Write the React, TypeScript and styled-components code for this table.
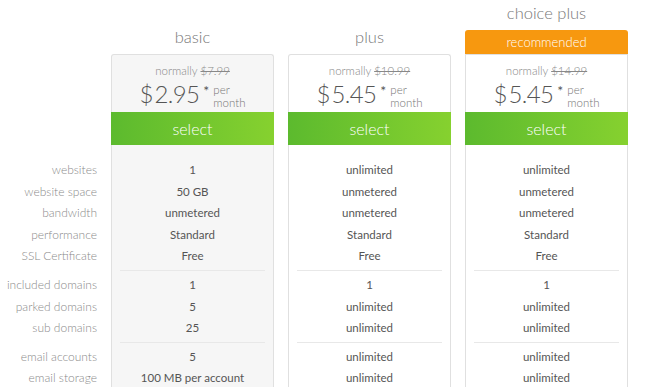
import React from 'react';
import styled, { createGlobalStyle } from 'styled-components';

const GlobalStyle = createGlobalStyle`
  html, body {
    margin: 0;
    padding: 0;
    background: #ffffff;
    font-family: Lato, "Open Sans", "Liberation Sans", sans-serif;
    overflow: hidden;
  }
`;

type Plan = {
  name: string;
  was: string;
  price: string;
  recommended?: boolean;
  shaded?: boolean;
  groups: string[][];
};

const labelGroups = [
  ['websites', 'website space', 'bandwidth', 'performance', 'SSL Certificate'],
  ['included domains', 'parked domains', 'sub domains'],
  ['email accounts', 'email storage'],
];

const plans: Plan[] = [
  {
    name: 'basic',
    was: '$7.99',
    price: '2.95',
    shaded: true,
    groups: [
      ['1', '50 GB', 'unmetered', 'Standard', 'Free'],
      ['1', '5', '25'],
      ['5', '100 MB per account'],
    ],
  },
  {
    name: 'plus',
    was: '$10.99',
    price: '5.45',
    groups: [
      ['unlimited', 'unmetered', 'unmetered', 'Standard', 'Free'],
      ['1', 'unlimited', 'unlimited'],
      ['unlimited', 'unlimited'],
    ],
  },
  {
    name: 'choice plus',
    was: '$14.99',
    price: '5.45',
    recommended: true,
    groups: [
      ['unlimited', 'unmetered', 'unmetered', 'Standard', 'Free'],
      ['1', 'unlimited', 'unlimited'],
      ['unlimited', 'unlimited'],
    ],
  },
];

const Page = styled.div`
  display: flex;
  align-items: stretch;
  gap: 14px;
`;

// head (54) + card border (1) + price box (57) + select bar (33)
const LabelColumn = styled.div`
  flex: none;
  width: 97px;
  padding-top: 145px;
`;

const PlanColumn = styled.div`
  flex: none;
  width: 163px;
  display: flex;
  flex-direction: column;
`;

const Head = styled.div`
  flex: none;
  height: 54px;
  display: flex;
  flex-direction: column;
  justify-content: flex-end;
`;

const Title = styled.div`
  height: 24px;
  line-height: 24px;
  margin-bottom: 5px;
  text-align: center;
  font-size: 16.5px;
  font-weight: 300;
  color: #777;
`;

const Ribbon = styled.div`
  height: 24px;
  line-height: 24px;
  background: #f7980f;
  border-radius: 3px 3px 0 0;
  color: #fff;
  text-align: center;
  font-size: 13px;
  font-weight: 300;
`;

const Card = styled.div<{ $shaded?: boolean; $flat?: boolean }>`
  flex: 1 0 auto;
  background: ${({ $shaded }) => ($shaded ? '#f6f6f6' : '#fff')};
  border: 1px solid #e0e0e0;
  border-bottom: none;
  border-radius: ${({ $flat }) => ($flat ? '0' : '3px 3px 0 0')};
`;

const PriceBox = styled.div`
  height: 57px;
  display: flex;
  flex-direction: column;
  align-items: center;
  padding-top: 9px;
  box-sizing: border-box;
`;

const Normally = styled.div`
  font-size: 11.5px;
  font-weight: 300;
  color: #888;
  line-height: 14px;
`;

const PriceRow = styled.div`
  display: flex;
  align-items: flex-start;
  color: #555;
  margin-top: 2px;
`;

const Dollar = styled.span`
  font-size: 24px;
  line-height: 28px;
  font-weight: 300;
`;

const Amount = styled.span`
  font-size: 24px;
  line-height: 28px;
  font-weight: 300;
  letter-spacing: -0.6px;
  margin-left: 1px;
`;

const Star = styled.span`
  font-size: 14px;
  line-height: 14px;
  margin: 4px 4px 0 4px;
`;

const PerMonth = styled.span`
  font-size: 11.5px;
  line-height: 13px;
  color: #777;
  margin-top: 3px;
  font-weight: 300;
`;

const SelectBar = styled.div`
  height: 33px;
  margin: 0 -1px;
  background: linear-gradient(to right, #5cba2e, #86d12f);
  color: #fff;
  text-align: center;
  line-height: 33px;
  font-size: 16px;
  font-weight: 300;
`;

const Group = styled.div<{ $first?: boolean; $last?: boolean; $inset?: boolean }>`
  padding: ${({ $first }) => ($first ? '14px' : '3px')} 0 ${({ $last }) => ($last ? '0' : '3px')};
  margin: 0 ${({ $inset }) => ($inset ? '8px' : '0')};
  border-bottom: ${({ $last, $inset }) => ($last ? 'none' : $inset ? '1px solid #e8e8e8' : '1px solid transparent')};
`;

const Row = styled.div<{ $label?: boolean }>`
  height: 21.6px;
  line-height: 21.6px;
  font-size: ${({ $label }) => ($label ? '12px' : '11.5px')};
  font-weight: ${({ $label }) => ($label ? 300 : 400)};
  white-space: nowrap;
  text-align: ${({ $label }) => ($label ? 'right' : 'center')};
  color: ${({ $label }) => ($label ? '#8a8a8a' : '#555')};
`;

const Features = ({ groups, label }: { groups: string[][]; label?: boolean }) => (
  <>
    {groups.map((g, gi) => (
      <Group key={gi} $first={gi === 0} $last={gi === groups.length - 1} $inset={!label}>
        {g.map((v, i) => (
          <Row key={i} $label={label}>
            {v}
          </Row>
        ))}
      </Group>
    ))}
  </>
);

export default function App() {
  return (
    <>
      <GlobalStyle />
      <Page>
        <LabelColumn>
          <Features groups={labelGroups} label />
        </LabelColumn>
        {plans.map((p) => (
          <PlanColumn key={p.name}>
            <Head>
              <Title>{p.name}</Title>
              {p.recommended && <Ribbon>recommended</Ribbon>}
            </Head>
            <Card $shaded={p.shaded} $flat={p.recommended}>
              <PriceBox>
                <Normally>
                  normally <s>{p.was}</s>
                </Normally>
                <PriceRow>
                  <Dollar>$</Dollar>
                  <Amount>{p.price}</Amount>
                  <Star>*</Star>
                  <PerMonth>
                    per
                    <br />
                    month
                  </PerMonth>
                </PriceRow>
              </PriceBox>
              <SelectBar>select</SelectBar>
              <Features groups={p.groups} />
            </Card>
          </PlanColumn>
        ))}
      </Page>
    </>
  );
}
